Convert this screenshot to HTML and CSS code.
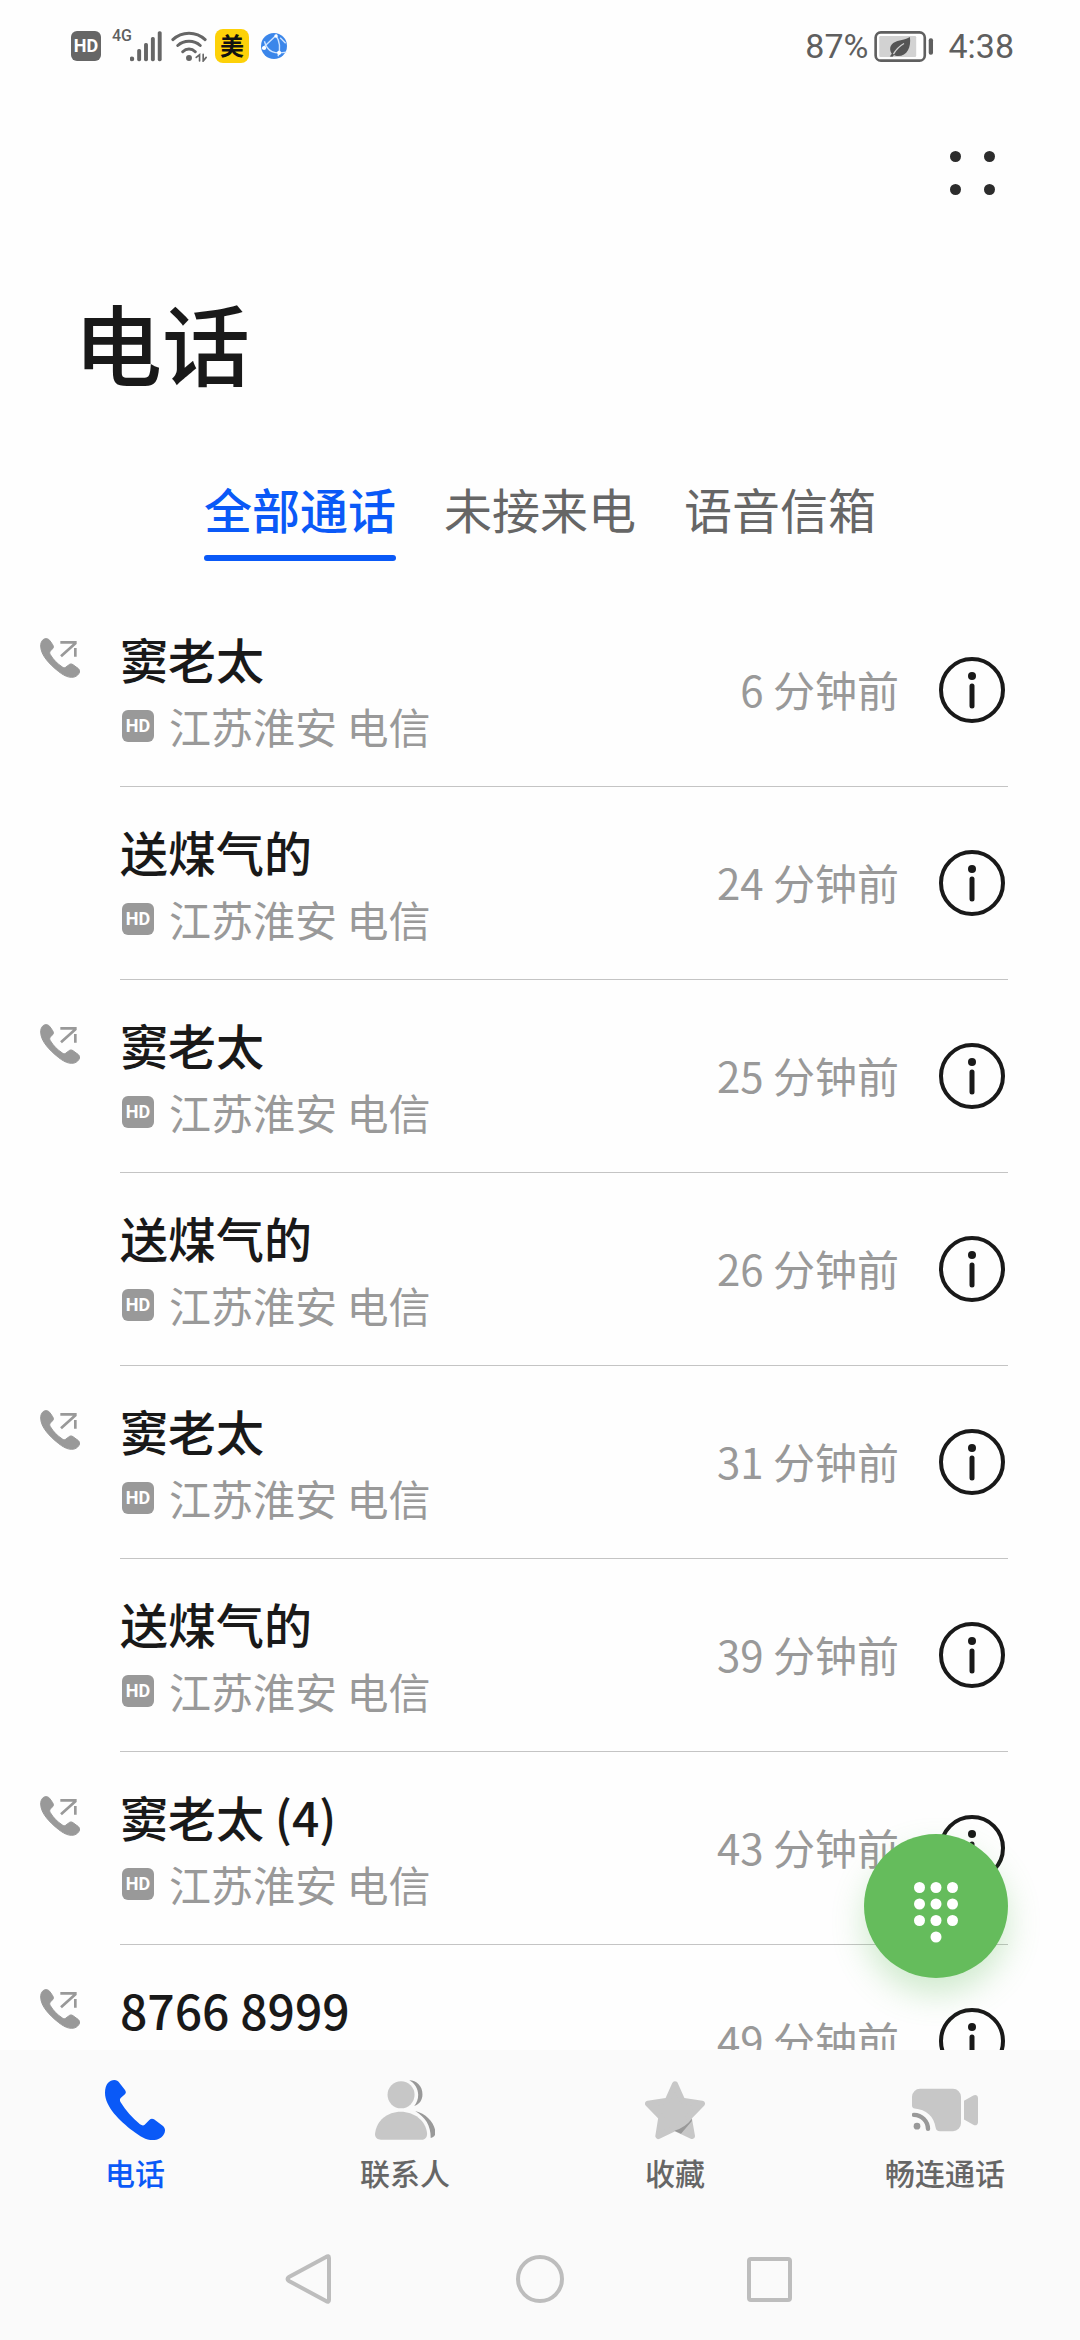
FILE: index.html
```html
<!DOCTYPE html>
<html lang="zh-CN">
<head>
	<meta charset="UTF-8">
	<meta name="viewport" content="width=device-width, initial-scale=1">
	<title>电话</title>
	<link rel="stylesheet" href="styles.css">
</head>
<body>
	<!-- 公用图标 -->
	<svg class="sprite" aria-hidden="true">
		<symbol id="phone" viewBox="0 0 180 180">
			<path d="M0 38C0 12 14 0 28 0c7 0 11 3 15 8l17 22c4 6 3 10-2 14L47 54c-4 5-2 9 0 13 15 25 35 47 58 66 6 4 11 4 14 1l14-14c4-4 9-5 14-2l27 20c8 8 7 17 3 24-7 12-18 18-34 18-20 0-38-11-60-28C45 123 0 80 0 38z"/>
		</symbol>
		<symbol id="callout" viewBox="0 0 120 120">
			<path fill="currentColor" stroke="currentColor" stroke-width="3" d="M2 24C2 9 10 2 18 2c5 0 8 2 11 5l9 13c3 5 3 9-1 13l-6 6c-3 4-2 7 0 11 9 15 21 27 36 37 4 3 8 3 11 0l8-6c4-4 9-4 13-1l15 11c5 4 6 10 3 15-5 8-12 12-22 12-13 0-26-7-40-18C30 80 2 52 2 24z"/>
			<path fill="none" stroke="currentColor" stroke-width="8" d="M61 13H110M63 55L108 14M106 30V56"/>
		</symbol>
		<symbol id="info" viewBox="0 0 66 66">
			<circle cx="33" cy="33" r="31" fill="none" stroke="#191919" stroke-width="4"/>
			<circle cx="33" cy="19" r="4" fill="#191919"/>
			<path d="M33 29V49" stroke="#191919" stroke-width="5" stroke-linecap="round"/>
		</symbol>
	</svg>

	<div class="status">
		<span class="hd hd_big">HD</span>
		<span class="net">4G</span>
		<svg class="signal" viewBox="0 0 98 94" fill="#666">
			<circle cx="6" cy="85" r="7"/>
			<rect x="22" y="55" width="12" height="37" rx="5"/>
			<rect x="43" y="36" width="12" height="56" rx="5"/>
			<rect x="64" y="18" width="12" height="74" rx="5"/>
			<rect x="85" y="0" width="12" height="92" rx="5"/>
		</svg>
		<svg class="wifi" viewBox="0 0 108 94" fill="none" stroke="#666" stroke-width="9" stroke-linecap="round">
			<path d="M5 26C32 0 76 0 103 26M20 44C38 27 70 27 88 44M35 63C46 52 62 52 73 63"/>
			<circle cx="54" cy="82" r="9" fill="#666" stroke="none"/>
			<path d="M76 80L86 72V91M97 71V91L106 80" stroke-width="5"/>
		</svg>
		<span class="mei">美</span>
		<svg class="globe" viewBox="0 0 76 76">
			<circle cx="38" cy="38" r="38" fill="#3b86ea"/>
			<path d="M3 46L46 5M10 24C18 56 40 62 74 56M44 8C56 26 58 44 50 68M56 14L72 30" fill="none" stroke="#cfe4ff" stroke-width="4"/>
			<circle cx="44" cy="9" r="5" fill="#fff"/>
			<circle cx="9" cy="44" r="6" fill="#fff"/>
			<circle cx="53" cy="58" r="6" fill="#fff"/>
		</svg>
		<span class="power">87%</span>
		<svg class="battery" viewBox="0 0 180 94">
			<rect x="4" y="4" width="149" height="86" rx="16" fill="none" stroke="#5f5f5f" stroke-width="8"/>
			<rect x="15" y="15" width="112" height="64" rx="4" fill="#d2d2d2"/>
			<path d="M108 18C112 48 100 76 72 76c-5 0-9 0-12-3l-5 5-8-1 6-8C42 52 50 36 70 30c14-4 26-4 38-12z" fill="#555"/>
			<path d="M58 70C66 56 76 46 90 38" fill="none" stroke="#d2d2d2" stroke-width="4"/>
			<rect x="165" y="22" width="13" height="50" rx="6" fill="#5f5f5f"/>
		</svg>
		<span class="clock">4:38</span>
	</div>

	<header class="header">
		<button class="more" aria-label="更多">
			<span></span><span></span><span></span><span></span>
		</button>
		<h1 class="title">电话</h1>
		<nav class="tabs">
			<a class="tab active" href="#">全部通话</a>
			<a class="tab" href="#">未接来电</a>
			<a class="tab" href="#">语音信箱</a>
		</nav>
	</header>

	<main class="main">
		<ul class="list">
			<li class="row">
				<svg class="out"><use href="#callout"/></svg>
				<div class="item">
					<div class="who">
						<div class="name">窦老太</div>
						<div class="from"><span class="hd">HD</span>江苏淮安 电信</div>
					</div>
					<span class="time">6 分钟前</span>
					<button class="info" aria-label="详情"><svg><use href="#info"/></svg></button>
				</div>
			</li>
			<li class="row">
				<div class="item">
					<div class="who">
						<div class="name">送煤气的</div>
						<div class="from"><span class="hd">HD</span>江苏淮安 电信</div>
					</div>
					<span class="time">24 分钟前</span>
					<button class="info" aria-label="详情"><svg><use href="#info"/></svg></button>
				</div>
			</li>
			<li class="row">
				<svg class="out"><use href="#callout"/></svg>
				<div class="item">
					<div class="who">
						<div class="name">窦老太</div>
						<div class="from"><span class="hd">HD</span>江苏淮安 电信</div>
					</div>
					<span class="time">25 分钟前</span>
					<button class="info" aria-label="详情"><svg><use href="#info"/></svg></button>
				</div>
			</li>
			<li class="row">
				<div class="item">
					<div class="who">
						<div class="name">送煤气的</div>
						<div class="from"><span class="hd">HD</span>江苏淮安 电信</div>
					</div>
					<span class="time">26 分钟前</span>
					<button class="info" aria-label="详情"><svg><use href="#info"/></svg></button>
				</div>
			</li>
			<li class="row">
				<svg class="out"><use href="#callout"/></svg>
				<div class="item">
					<div class="who">
						<div class="name">窦老太</div>
						<div class="from"><span class="hd">HD</span>江苏淮安 电信</div>
					</div>
					<span class="time">31 分钟前</span>
					<button class="info" aria-label="详情"><svg><use href="#info"/></svg></button>
				</div>
			</li>
			<li class="row">
				<div class="item">
					<div class="who">
						<div class="name">送煤气的</div>
						<div class="from"><span class="hd">HD</span>江苏淮安 电信</div>
					</div>
					<span class="time">39 分钟前</span>
					<button class="info" aria-label="详情"><svg><use href="#info"/></svg></button>
				</div>
			</li>
			<li class="row">
				<svg class="out"><use href="#callout"/></svg>
				<div class="item">
					<div class="who">
						<div class="name">窦老太 (4)</div>
						<div class="from"><span class="hd">HD</span>江苏淮安 电信</div>
					</div>
					<span class="time">43 分钟前</span>
					<button class="info" aria-label="详情"><svg><use href="#info"/></svg></button>
				</div>
			</li>
			<li class="row">
				<svg class="out"><use href="#callout"/></svg>
				<div class="item">
					<div class="who">
						<div class="name">8766 8999</div>
					</div>
					<span class="time">49 分钟前</span>
					<button class="info" aria-label="详情"><svg><use href="#info"/></svg></button>
				</div>
			</li>
		</ul>
		<!-- 拨号盘按钮 -->
		<button class="dial" aria-label="拨号盘">
			<svg viewBox="0 0 144 144" fill="#fff">
				<circle cx="55.5" cy="53.5" r="5.5"/><circle cx="72" cy="53.5" r="5.5"/><circle cx="88.5" cy="53.5" r="5.5"/>
				<circle cx="55.5" cy="70" r="5.5"/><circle cx="72" cy="70" r="5.5"/><circle cx="88.5" cy="70" r="5.5"/>
				<circle cx="55.5" cy="86.5" r="5.5"/><circle cx="72" cy="86.5" r="5.5"/><circle cx="88.5" cy="86.5" r="5.5"/>
				<circle cx="72" cy="103" r="5.5"/>
			</svg>
		</button>
	</main>

	<footer class="footer">
		<nav class="menu">
			<a class="menu_item on" href="#">
				<svg fill="#0a59f7"><use href="#phone"/></svg>
				<span>电话</span>
			</a>
			<a class="menu_item" href="#">
				<svg viewBox="0 0 182 180">
					<path fill="#999" d="M104 0c22 0 40 18 40 42 0 18-9 30-25 36 8-10 12-20 12-34C131 26 120 8 104 0zM122 93c34 8 58 36 61 62 1 12-4 18-14 20 0-40-16-62-47-82z"/>
					<circle cx="79" cy="44" r="41" fill="#c7c7c7"/>
					<path fill="#c7c7c7" d="M18 180C8 180 0 175 0 163c4-42 38-68 78-68s76 26 80 66c0 12-6 19-16 19z"/>
				</svg>
				<span>联系人</span>
			</a>
			<a class="menu_item" href="#">
				<svg viewBox="0 0 180 180">
					<path fill="#c7c7c7" stroke="#c7c7c7" stroke-width="18" stroke-linejoin="round" d="M90 13L112 62 171 71 131 112 141 168 90 144 40 168 49 112 9 71 68 62z"/>
					<path fill="#999" d="M88 152Q120 143 141 116L140 124 108 161z"/>
				</svg>
				<span>收藏</span>
			</a>
			<a class="menu_item" href="#">
				<svg class="wide" viewBox="0 0 198 127">
					<path fill="#c7c7c7" d="M24 0h99a24 24 0 0 1 24 24v79a24 24 0 0 1-24 24H84c-8 0-12-3-13-10C66 82 42 62 8 59 3 58 0 56 0 50V24A24 24 0 0 1 24 0zM156 36l28-16c7-4 14 0 14 8v72c0 8-7 12-14 8l-28-16z"/>
					<circle cx="15" cy="112" r="10" fill="#999"/>
					<path d="M6 78A43 43 0 0 1 48 120" fill="none" stroke="#999" stroke-width="13" stroke-linecap="round"/>
				</svg>
				<span>畅连通话</span>
			</a>
		</nav>
		<div class="keys">
			<button aria-label="返回"><svg viewBox="0 0 50 50"><path d="M44 4V46Q44 49 41 47L4 27Q1 25 4 23L41 3Q44 1 44 4z"/></svg></button>
			<button aria-label="主页"><svg viewBox="0 0 50 50"><circle cx="25" cy="25" r="22"/></svg></button>
			<button aria-label="最近任务"><svg viewBox="0 0 50 50"><rect x="4" y="5" width="41" height="41" rx="2"/></svg></button>
		</div>
	</footer>
</body>
</html>
```
FILE: styles.css
```css
*{
	box-sizing: border-box;
}

body{
	margin: 0;
	height: 100vh;
	display: flex;
	flex-direction: column;
	overflow: hidden;
	background-color: #fefefe;
	color: #191919;
	font-family: "Noto Sans CJK SC", sans-serif;
}

a{
	color: inherit;
	text-decoration: none;
}

button{
	padding: 0;
	border: none;
	background: none;
}

svg{
	display: block;
}

.sprite{
	position: absolute;
	width: 0;
	height: 0;
}

/* 状态栏 */
.status{
	display: flex;
	align-items: center;
	height: 92px;
	padding: 0 66px 0 71px;
	color: #5f5f5f;
	font-family: Roboto, sans-serif;
	font-size: 34px;
}

.hd{
	flex: none;
	width: 32px;
	height: 32px;
	border-radius: 6px;
	background-color: #999;
	color: #fff;
	font-family: Roboto, sans-serif;
	font-size: 18px;
	font-weight: bold;
	line-height: 32px;
	text-align: center;
}

.hd_big{
	width: 30px;
	height: 30px;
	background-color: #666;
	line-height: 30px;
}

.net{
	align-self: flex-start;
	width: 18px;
	margin: 26px 0 0 11px;
	font-size: 16px;
	font-weight: 500;
	line-height: 20px;
}

.signal{
	width: 32px;
	height: 31px;
}

.wifi{
	width: 36px;
	height: 31px;
	margin: 0 8px 0 9px;
}

.mei{
	width: 34px;
	height: 34px;
	border-radius: 8px;
	background-color: #fdd108;
	color: #111;
	font-family: "Noto Sans CJK SC", sans-serif;
	font-size: 24px;
	font-weight: bold;
	line-height: 32px;
	text-align: center;
}

.globe{
	width: 26px;
	height: 26px;
	margin: 0 auto 0 12px;
}

.battery{
	width: 60px;
	height: 31px;
	margin: 0 14px 0 6px;
}

/* 标题和选项卡 */
.header{
	display: flex;
	flex-direction: column;
}

.more{
	display: grid;
	grid-template-columns: 11px 11px;
	gap: 22px 23px;
	align-self: flex-end;
	margin: 59px 85px 0 0;
}

.more span{
	height: 11px;
	border-radius: 50%;
	background-color: #2c2c2c;
}

.title{
	margin: 80px 74px 0;
	font-size: 88px;
	font-weight: 500;
	line-height: 132px;
}

.tabs{
	display: flex;
	justify-content: center;
	gap: 48px;
	margin: 68px 0 33px;
}

.tab{
	position: relative;
	padding-bottom: 20px;
	color: #666;
	font-size: 48px;
	line-height: 66px;
}

.tab.active{
	color: #0a59f7;
	font-weight: 500;
}

/* 选中下划线 */
.tab.active::after{
	content: "";
	position: absolute;
	left: 0;
	right: 0;
	bottom: 0;
	height: 6px;
	border-radius: 3px;
	background-color: #0a59f7;
}

/* 通话记录 */
.main{
	flex: 1;
	min-height: 0;
	position: relative;
	overflow: hidden;
}

.list{
	margin: 0;
	padding: 0;
	list-style: none;
}

.row{
	display: grid;
	grid-template-columns: 80px 1fr;
	padding: 0 72px 0 40px;
}

.out{
	width: 40px;
	height: 40px;
	margin-top: 44px;
	color: #999;
}

.item{
	grid-column: 2;
	display: flex;
	align-items: center;
	min-height: 193px;
	border-bottom: 1px solid #c4c4c4;
}

.who{
	flex: 1;
	align-self: flex-start;
	padding-top: 31px;
}

.name{
	font-size: 48px;
	font-weight: 500;
	line-height: 66px;
}

.from{
	display: flex;
	align-items: center;
	gap: 15px;
	padding-left: 2px;
	color: #999;
	font-size: 42px;
	line-height: 69px;
}

.time{
	padding-bottom: 3px;
	color: #999;
	font-size: 42px;
}

.info{
	margin: 0 3px 0 40px;
}

.info svg{
	width: 66px;
	height: 66px;
}

.dial{
	position: absolute;
	right: 72px;
	bottom: 72px;
	width: 144px;
	height: 144px;
	border-radius: 50%;
	background-color: #65bc5c;
	box-shadow: 0 16px 32px rgba(101, 188, 92, 0.3);
}

/* 底部 */
.footer{
	background-color: #fafafa;
}

.menu{
	display: flex;
	padding-top: 30px;
}

.menu_item{
	flex: 1;
	display: flex;
	flex-direction: column;
	align-items: center;
	gap: 10px;
	color: #666;
	font-size: 30px;
	font-weight: 500;
	line-height: 44px;
}

.menu_item.on{
	color: #0a59f7;
}

.menu_item svg{
	width: 60px;
	height: 60px;
}

.menu_item .wide{
	width: 66px;
}

.keys{
	display: flex;
	justify-content: center;
	gap: 180px;
	padding: 60px 0 36px;
}

.keys svg{
	width: 50px;
	height: 50px;
	fill: none;
	stroke: #bdbdbd;
	stroke-width: 4px;
}
```
